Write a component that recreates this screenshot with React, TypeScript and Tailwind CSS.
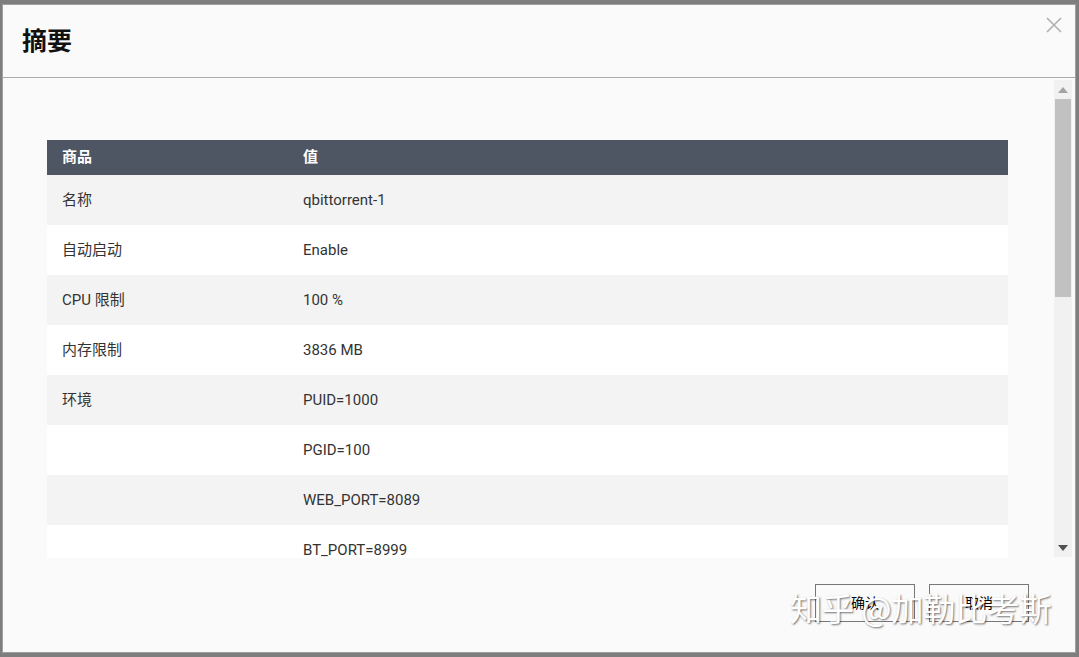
import React from "react";

const rows: [string, string][] = [
  ["名称", "qbittorrent-1"],
  ["自动启动", "Enable"],
  ["CPU 限制", "100 %"],
  ["内存限制", "3836 MB"],
  ["环境", "PUID=1000"],
  ["", "PGID=100"],
  ["", "WEB_PORT=8089"],
  ["", "BT_PORT=8999"],
  ["", "TZ=Asia/Shanghai"],
  ["", "UMASK=022"],
];

const font = { fontFamily: 'Roboto, "Noto Sans CJK SC", sans-serif' };

export default function App() {
  return (
    <div className="w-[1079px] h-[657px] bg-[#7e7e7e] pt-[4px] pl-[2px] overflow-hidden" style={font}>
      <div className="relative w-[1074px] h-[649px] bg-[#fafafa] border border-[#a0a0a0] flex flex-col">
        {/* header */}
        <div className="h-[73px] shrink-0 border-b border-[#ababab] flex items-center pl-[19px]">
          <span className="text-[25px] font-bold text-[#111] leading-none">摘要</span>
        </div>
        <button className="absolute left-[1043px] top-[12px] w-[16px] h-[16px]">
          <svg width="16" height="16" viewBox="0 0 16 16">
            <path d="M1 1L15 15M15 1L1 15" stroke="#b0b0b0" strokeWidth="1.6" />
          </svg>
        </button>
        {/* body */}
        <div className="h-[480px] shrink-0 flex">
          <div className="flex-1 overflow-hidden pt-[62px] pl-[44px] pr-[46px]">
            <div className="w-full">
              <div className="h-[35px] bg-[#4f5663] flex items-center text-white text-[15px] font-bold">
                <div className="w-[256px] pl-[15px]">商品</div>
                <div>值</div>
              </div>
              {rows.map(([k, v], i) => (
                <div
                  key={i}
                  className={`h-[50px] flex items-center text-[15px] text-[#333] ${i % 2 === 0 ? "bg-[#f3f3f3]" : "bg-white"}`}
                >
                  <div className="w-[256px] pl-[15px]">{k}</div>
                  <div>{v}</div>
                </div>
              ))}
            </div>
          </div>
          {/* scrollbar */}
          <div className="w-[18px] mr-[3px] mt-[2px] mb-[1px] bg-[#f1f1f1] flex flex-col items-center">
            <div className="h-[19px] w-full flex items-center justify-center">
              <svg width="10" height="6" viewBox="0 0 10 6"><path d="M5 0L10 6H0Z" fill="#a3a3a3" /></svg>
            </div>
            <div className="w-[16px] h-[198px] bg-[#c1c1c1]" />
            <div className="flex-1" />
            <div className="h-[19px] w-full flex items-center justify-center">
              <svg width="10" height="6" viewBox="0 0 10 6"><path d="M0 0H10L5 6Z" fill="#505050" /></svg>
            </div>
          </div>
        </div>
        {/* footer */}
        <div className="flex-1 flex justify-end items-start pt-[26px] pr-[46px] gap-[14px]">
          <button className="w-[100px] h-[38px] border border-[#777] bg-[#fafafa] text-[14px] text-black">确认</button>
          <button className="w-[100px] h-[38px] border border-[#777] bg-[#fafafa] text-[14px] text-black">取消</button>
        </div>
        {/* watermark */}
        <div
          className="absolute left-[787px] top-[586px] text-[32px] leading-none text-white whitespace-nowrap pointer-events-none"
          style={{ textShadow: "1px 1px 2px rgba(0,0,0,0.55)", fontFamily: '"Noto Sans CJK SC", sans-serif' }}
        >
          知乎 @加勒比考斯
        </div>
      </div>
    </div>
  );
}
